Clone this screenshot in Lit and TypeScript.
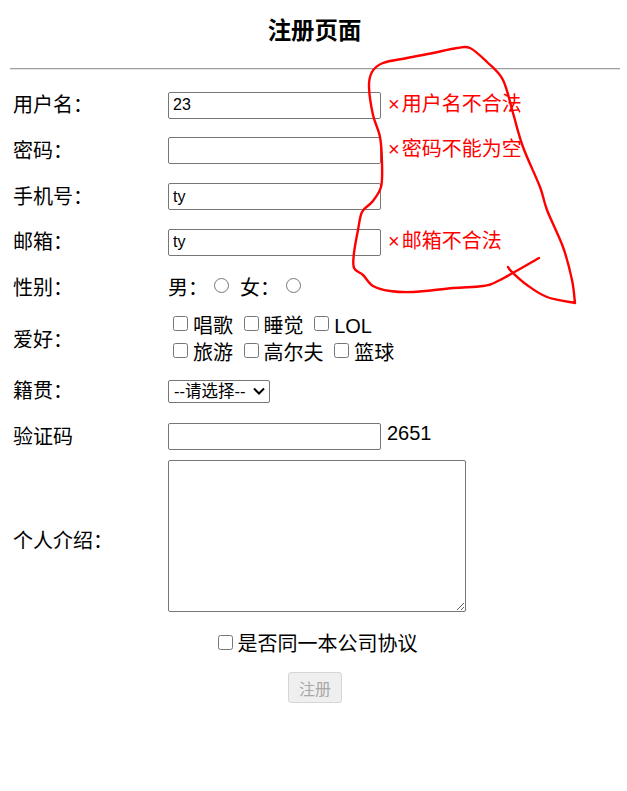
import { LitElement, html, css } from "lit";
import { customElement } from "lit/decorators.js";

type Pt = [number, number];

/* Freehand pen stroke: a smooth curve through sampled points. */
function smooth(pts: Pt[]): string {
  let d = `M${pts[0][0]} ${pts[0][1]}`;
  for (let i = 0; i < pts.length - 1; i++) {
    const p0 = pts[Math.max(i - 1, 0)];
    const p1 = pts[i];
    const p2 = pts[i + 1];
    const p3 = pts[Math.min(i + 2, pts.length - 1)];
    const c1x = p1[0] + (p2[0] - p0[0]) / 6;
    const c1y = p1[1] + (p2[1] - p0[1]) / 6;
    const c2x = p2[0] - (p3[0] - p1[0]) / 6;
    const c2y = p2[1] - (p3[1] - p1[1]) / 6;
    d += ` C${c1x.toFixed(1)} ${c1y.toFixed(1)} ${c2x.toFixed(1)} ${c2y.toFixed(1)} ${p2[0]} ${p2[1]}`;
  }
  return d;
}

const LOOP: Pt[] = [
  [539, 258], [500, 280], [483, 286], [453, 288], [413, 292], [390, 291], [373, 286],
  [363, 275], [354, 268], [354, 253], [358, 230], [362, 212], [372, 202], [381, 187],
  [382, 163], [380, 137], [373, 115], [369, 87], [372, 72], [383, 63], [407, 58],
  [433, 53], [457, 48], [470, 48], [487, 62], [503, 80], [513, 113], [523, 147],
  [540, 187], [547, 210], [563, 247], [572, 280], [575, 303],
];
const TAIL: Pt[] = [[575, 303], [547, 297], [527, 285], [512, 272], [508, 267]];

const CHEVRON = `url("data:image/svg+xml,%3Csvg xmlns='http://www.w3.org/2000/svg' width='14' height='10' viewBox='0 0 14 10'%3E%3Cpath d='M2 2.5 L7 7.5 L12 2.5' fill='none' stroke='%23000' stroke-width='2'/%3E%3C/svg%3E")`;

@customElement("app-root")
export class AppRoot extends LitElement {
  static styles = css`
    :host {
      display: block;
      position: relative;
      width: 627px;
      height: 791px;
      overflow: hidden;
      background: #fff;
      color: #000;
      font-family: "Liberation Sans", "Noto Sans CJK SC", sans-serif;
      font-size: 20px;
    }
    h1 {
      margin: 0;
      padding: 17px 0 0 2px;
      height: 68px;
      box-sizing: border-box;
      text-align: center;
      font-size: 23.4px;
      line-height: 28px;
      font-weight: 700;
    }
    hr {
      margin: 0 7px 0 10px;
      border: 0;
      border-top: 1px solid #a0a0a0;
      border-bottom: 1px solid #e4e4e4;
      height: 0;
    }
    form {
      display: flex;
      flex-direction: column;
      padding: 21.3px 0 0 13px;
    }
    .row {
      display: grid;
      grid-template-columns: 155px 1fr;
      align-items: center;
      min-height: 28px;
      margin-bottom: 17.67px;
      line-height: 28px;
    }
    .row.captcha {
      margin-bottom: 9.4px;
    }
    .row.bio {
      margin-bottom: 0;
    }
    .row.bio > span {
      margin-top: 9px;
    }
    .field {
      display: flex;
      align-items: center;
    }
    input[type="text"] {
      width: 213px;
      height: 27px;
      box-sizing: border-box;
      margin: 0;
      padding: 1px 4px;
      font: 16px "Liberation Sans", sans-serif;
      border: 1px solid #767676;
      border-radius: 2px;
      color: #000;
    }
    .err {
      margin: -3px 0 0 7px;
      color: #f00;
    }
    .err i {
      font-style: normal;
      margin-right: 2px;
    }
    .code {
      margin-left: 6px;
      margin-top: -7px;
    }
    input[type="radio"] {
      width: 15px;
      height: 15px;
      margin: 0 10px 0 6px;
      transform: translateY(-2px);
    }
    input[type="radio"] + input,
    .female {
      margin-left: 1px;
    }
    .cb {
      width: 15px;
      height: 15px;
      margin: 0 5px 0 5px;
      flex: none;
      transform: translateY(-2px);
    }
    .hobbies {
      display: flex;
      flex-direction: column;
      line-height: 26px;
      margin: -6px 0;
    }
    .hobbies div {
      display: flex;
      align-items: center;
    }
    .hobbies div:first-child {
      transform: translateY(-1px);
    }
    .hobbies span {
      margin-right: 5.6px;
    }
    select {
      appearance: none;
      height: 23px;
      width: 102px;
      margin: 0;
      font: 16.5px "Liberation Sans", "Noto Sans CJK SC", sans-serif;
      background: #fff ${css([CHEVRON] as unknown as TemplateStringsArray)} no-repeat right 3px center;
      border: 1px solid #767676;
      border-radius: 2px;
      padding: 0 0 0 5px;
      color: #000;
    }
    textarea {
      display: block;
      width: 298px;
      height: 152px;
      box-sizing: border-box;
      margin: 0;
      border: 1px solid #767676;
      border-radius: 2px;
    }
    .agree {
      display: flex;
      justify-content: center;
      align-items: center;
      margin-top: 18px;
      padding-right: 10px;
      line-height: 28px;
    }
    .submit {
      display: flex;
      justify-content: center;
      margin-top: 14px;
      padding-right: 10px;
    }
    button {
      width: 54px;
      height: 31px;
      margin: 0;
      padding: 0;
      font: 16px "Liberation Sans", "Noto Sans CJK SC", sans-serif;
      color: #a8a8a8;
      background: #efefef;
      border: 1px solid #d6d6d6;
      border-radius: 3px;
    }
    .ink {
      position: absolute;
      left: 0;
      top: 0;
      pointer-events: none;
    }
  `;

  private textRow(label: string, value: string, err = "") {
    return html`<div class="row">
      <span>${label}</span>
      <div class="field">
        <input type="text" .value=${value} />
        ${err ? html`<span class="err"><i>×</i>${err}</span>` : ""}
      </div>
    </div>`;
  }

  render() {
    return html`
      <h1>注册页面</h1>
      <hr />
      <form>
        ${this.textRow("用户名：", "23", "用户名不合法")}
        ${this.textRow("密码：", "", "密码不能为空")}
        ${this.textRow("手机号：", "ty")}
        ${this.textRow("邮箱：", "ty", "邮箱不合法")}
        <div class="row">
          <span>性别：</span>
          <div class="field">
            <span>男：</span><input type="radio" name="g" /><span class="female">女：</span><input type="radio" name="g" />
          </div>
        </div>
        <div class="row">
          <span>爱好：</span>
          <div class="hobbies">
            <div>
              <input class="cb" type="checkbox" /><span>唱歌</span>
              <input class="cb" type="checkbox" /><span>睡觉</span>
              <input class="cb" type="checkbox" /><span>LOL</span>
            </div>
            <div>
              <input class="cb" type="checkbox" /><span>旅游</span>
              <input class="cb" type="checkbox" /><span>高尔夫</span>
              <input class="cb" type="checkbox" /><span>篮球</span>
            </div>
          </div>
        </div>
        <div class="row">
          <span>籍贯：</span>
          <div class="field">
            <select><option>--请选择--</option></select>
          </div>
        </div>
        <div class="row captcha">
          <span>验证码</span>
          <div class="field">
            <input type="text" /><span class="code">2651</span>
          </div>
        </div>
        <div class="row bio">
          <span>个人介绍：</span>
          <div class="field"><textarea></textarea></div>
        </div>
        <div class="agree"><input class="cb" type="checkbox" />是否同一本公司协议</div>
        <div class="submit"><button type="button" disabled>注册</button></div>
      </form>
      <svg class="ink" width="627" height="791" viewBox="0 0 627 791" fill="none">
        <path d=${smooth(LOOP) + " " + smooth(TAIL)} stroke="#f00" stroke-width="2.4" stroke-linecap="round" stroke-linejoin="round" />
      </svg>
    `;
  }
}
